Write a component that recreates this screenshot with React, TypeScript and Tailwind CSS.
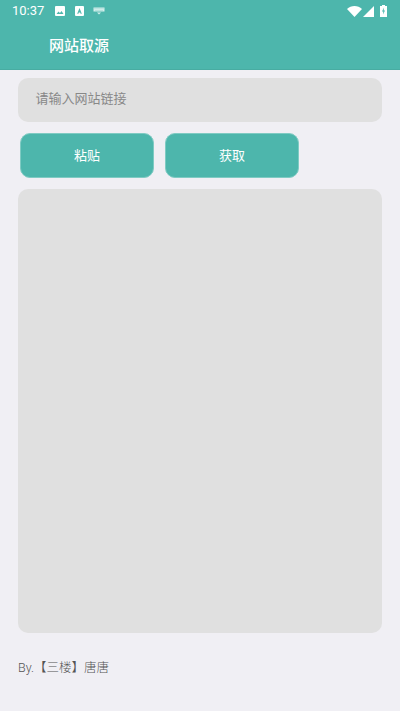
export default function App() {
  const cjk = { fontFamily: '"Roboto", "Noto Sans CJK SC", sans-serif' };
  return (
    <div className="w-[400px] h-[711px] bg-[#f0eff4] flex flex-col overflow-hidden" style={cjk}>
      <div className="h-[70px] bg-[#4db6ac] flex flex-col shrink-0 border-b border-[#48aca2]">
        <div className="h-6 flex items-center pl-3 pr-[13px] text-white">
          <span className="text-[13px] leading-[22px] w-[43px] -mt-[2px]">10:37</span>
          <svg width="10" height="10" viewBox="0 0 10 10" className="-mt-[2px]">
            <rect width="10" height="10" rx="1" fill="#fff" />
            <path d="M1.5 8 L3.5 5.5 L5 7 L6.5 5 L8.5 8Z" fill="#4db6ac" />
          </svg>
          <svg className="ml-[10px] -mt-[2px]" width="9" height="10" viewBox="0 0 9 10">
            <rect width="9" height="10" rx="1" fill="#fff" />
            <path d="M4.5 2 L6.8 7.8 H5.6 L5.2 6.6 H3.8 L3.4 7.8 H2.2Z" fill="#4db6ac" />
          </svg>
          <svg className="ml-[9px] -mt-[2px]" width="12" height="8" viewBox="0 0 12 8">
            <path d="M0.5 0.5h11v4h-11z" fill="#d5efec" />
            <path d="M2 1.5v.6M4 1.5v.6M6 1.5v.6M8 1.5v.6M10 1.5v.6M3 3v.6M5 3v.6M7 3v.6M9 3v.6" stroke="#4db6ac" strokeWidth="0.7" />
            <path d="M4 5.5h4L6 7.5z" fill="#d5efec" />
          </svg>
          <div className="flex-1" />
          <svg width="15" height="11" viewBox="0 0 15 11" className="-mt-[2px]">
            <path d="M0 3 C4 -1 11 -1 15 3 L7.5 11Z" fill="#fff" />
          </svg>
          <svg className="ml-[1px] -mt-[2px]" width="11" height="11" viewBox="0 0 11 11">
            <path d="M11 0 V11 H0Z" fill="#fff" />
          </svg>
          <svg className="ml-[6px] -mt-[2px]" width="7" height="12" viewBox="0 0 7 12">
            <path d="M2 0h3v1h2v11H0V1h2z" fill="#fff" />
            <path d="M4 2.5 L2 6.5 H3.3 L3 9.5 L5 5.5 H3.7Z" fill="#4db6ac" />
          </svg>
        </div>
        <div className="h-[45px] flex items-center pl-[49px] pb-[1px]">
          <h1 className="text-[15px] font-medium text-white leading-none">网站取源</h1>
        </div>
      </div>
      <div className="flex-1 flex flex-col px-[18px] pt-[7.5px]">
        <div className="h-11 shrink-0 rounded-[10px] bg-[#e0e0e0] flex items-center pl-[18px] pb-[1px] text-[13px] text-[#888888]">
          <span className="-ml-[0.5px]">请输入网站链接</span>
        </div>
        <div className="flex gap-[11px] mt-[11.5px] pl-[2px] shrink-0">
          <button className="w-[134px] h-[45px] rounded-[10px] border border-[#7fcbc3] bg-[#4db6ac] text-white text-[13px]">粘贴</button>
          <button className="w-[134px] h-[45px] rounded-[10px] border border-[#7fcbc3] bg-[#4db6ac] text-white text-[13px]">获取</button>
        </div>
        <div className="h-[444px] mt-[11px] shrink-0 rounded-[10px] bg-[#e0e0e0]" />
        <p className="mt-[26px] text-[12.5px] font-light leading-[18px] text-[#555555]">By.【三楼】唐唐</p>
      </div>
    </div>
  );
}
